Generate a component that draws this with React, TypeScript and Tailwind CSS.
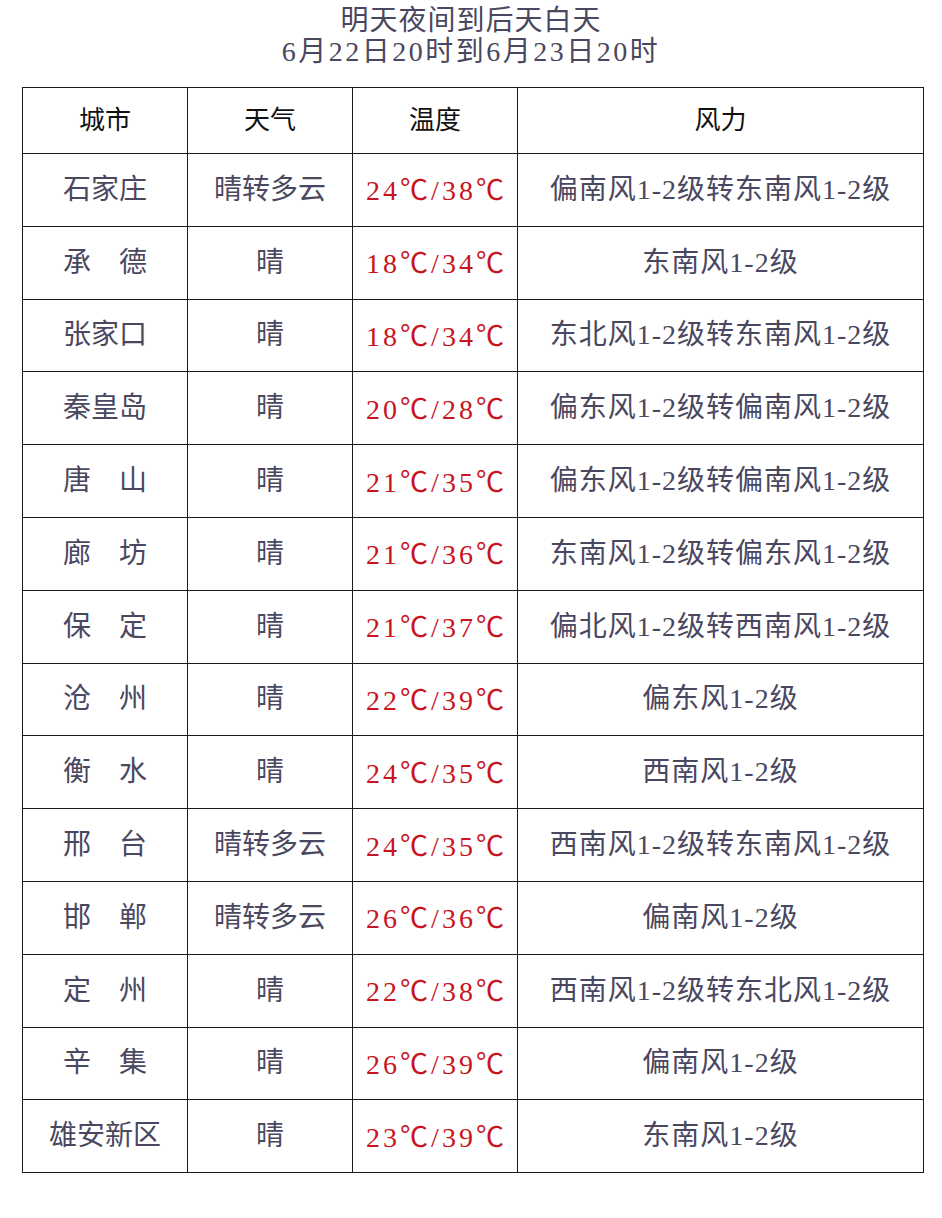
import React from "react";

const rows: [string, string, string, string, string][] = [
  ["石家庄", "晴转多云", "24", "38", "偏南风1-2级转东南风1-2级"],
  ["承　德", "晴", "18", "34", "东南风1-2级"],
  ["张家口", "晴", "18", "34", "东北风1-2级转东南风1-2级"],
  ["秦皇岛", "晴", "20", "28", "偏东风1-2级转偏南风1-2级"],
  ["唐　山", "晴", "21", "35", "偏东风1-2级转偏南风1-2级"],
  ["廊　坊", "晴", "21", "36", "东南风1-2级转偏东风1-2级"],
  ["保　定", "晴", "21", "37", "偏北风1-2级转西南风1-2级"],
  ["沧　州", "晴", "22", "39", "偏东风1-2级"],
  ["衡　水", "晴", "24", "35", "西南风1-2级"],
  ["邢　台", "晴转多云", "24", "35", "西南风1-2级转东南风1-2级"],
  ["邯　郸", "晴转多云", "26", "36", "偏南风1-2级"],
  ["定　州", "晴", "22", "38", "西南风1-2级转东北风1-2级"],
  ["辛　集", "晴", "26", "39", "偏南风1-2级"],
  ["雄安新区", "晴", "23", "39", "东南风1-2级"],
];

const font = {
  fontFamily: '"Liberation Serif", "Noto Sans CJK SC", serif',
};

const C = () => (
  <span className="font-['Noto_Sans_CJK_SC',sans-serif]">℃</span>
);

const cell =
  "border-[1.5px] border-[#1a1a1a] text-center align-middle text-[28px] whitespace-nowrap";

export default function App() {
  return (
    <div className="w-[942px] h-[1218px] bg-white" style={font}>
      <div className="pt-[5px] text-center text-[#4a4760] text-[28px] leading-[31px]">
        <div className="tracking-[1px]">明天夜间到后天白天</div>
        <div className="tracking-[2.5px]">6月22日20时到6月23日20时</div>
      </div>
      <table className="ml-[22px] mt-[20px] w-[901px] border-collapse table-fixed">
        <colgroup>
          <col className="w-[165px]" />
          <col className="w-[165px]" />
          <col className="w-[165px]" />
          <col className="w-[406px]" />
        </colgroup>
        <thead>
          <tr className="h-[66px]">
            {["城市", "天气", "温度", "风力"].map((h) => (
              <th
                key={h}
                className="border-[1.5px] border-[#1a1a1a] text-[26px] font-normal text-[#111] text-center align-middle"
              >
                {h}
              </th>
            ))}
          </tr>
        </thead>
        <tbody>
          {rows.map((r, i) => (
            <tr key={i} className="h-[72.8px]">
              <td className={`${cell} text-[#4a4760]`}>{r[0]}</td>
              <td className={`${cell} text-[#4a4760]`}>{r[1]}</td>
              <td className={`${cell} text-[#c8141e] tracking-[3px] pl-[3px]`}>
                {r[2]}
                <C />/{r[3]}
                <C />
              </td>
              <td className={`${cell} text-[#4a4760] tracking-[1px]`}>{r[4]}</td>
            </tr>
          ))}
        </tbody>
      </table>
    </div>
  );
}
